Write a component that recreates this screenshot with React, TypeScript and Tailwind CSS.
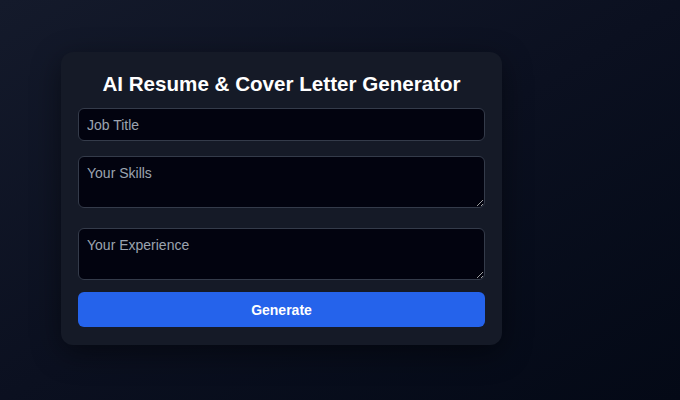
import React from 'react';

const App = () => {
  return (
    <div
      className="min-h-screen w-full flex items-start bg-gradient-to-br from-[#141a2b] via-[#0b1020] to-[#040916] pl-[61px] pt-[52px]"
      style={{ fontFamily: '"Liberation Sans", Arial, sans-serif' }}
    >
      <div className="w-[441px] rounded-xl bg-[#151a27] px-[17px] pt-[18px] pb-[18px] shadow-[0_8px_30px_rgba(0,0,0,0.45)]">
        <h1 className="text-center text-[20.6px] leading-7 font-bold text-white mb-[10px]">
          AI Resume &amp; Cover Letter Generator
        </h1>
        <input
          type="text"
          placeholder="Job Title"
          className="block w-full h-[33px] mb-[15px] rounded-md border border-[#343b4a] bg-[#02030f] px-2 text-sm text-gray-200 placeholder:text-[#9ca3af] outline-none"
        />
        <textarea
          placeholder="Your Skills"
          className="block w-full h-[52px] mb-[20px] rounded-md border border-[#343b4a] bg-[#02030f] px-2 py-2 text-sm leading-[normal] text-gray-200 placeholder:text-[#9ca3af] outline-none"
        />
        <textarea
          placeholder="Your Experience"
          className="block w-full h-[52px] mb-[12px] rounded-md border border-[#343b4a] bg-[#02030f] px-2 py-2 text-sm leading-[normal] text-gray-200 placeholder:text-[#9ca3af] outline-none"
        />
        <button
          type="button"
          className="block w-full h-[35px] rounded-md bg-[#2563eb] text-sm font-bold text-white"
        >
          Generate
        </button>
      </div>
    </div>
  );
};

export default App;
